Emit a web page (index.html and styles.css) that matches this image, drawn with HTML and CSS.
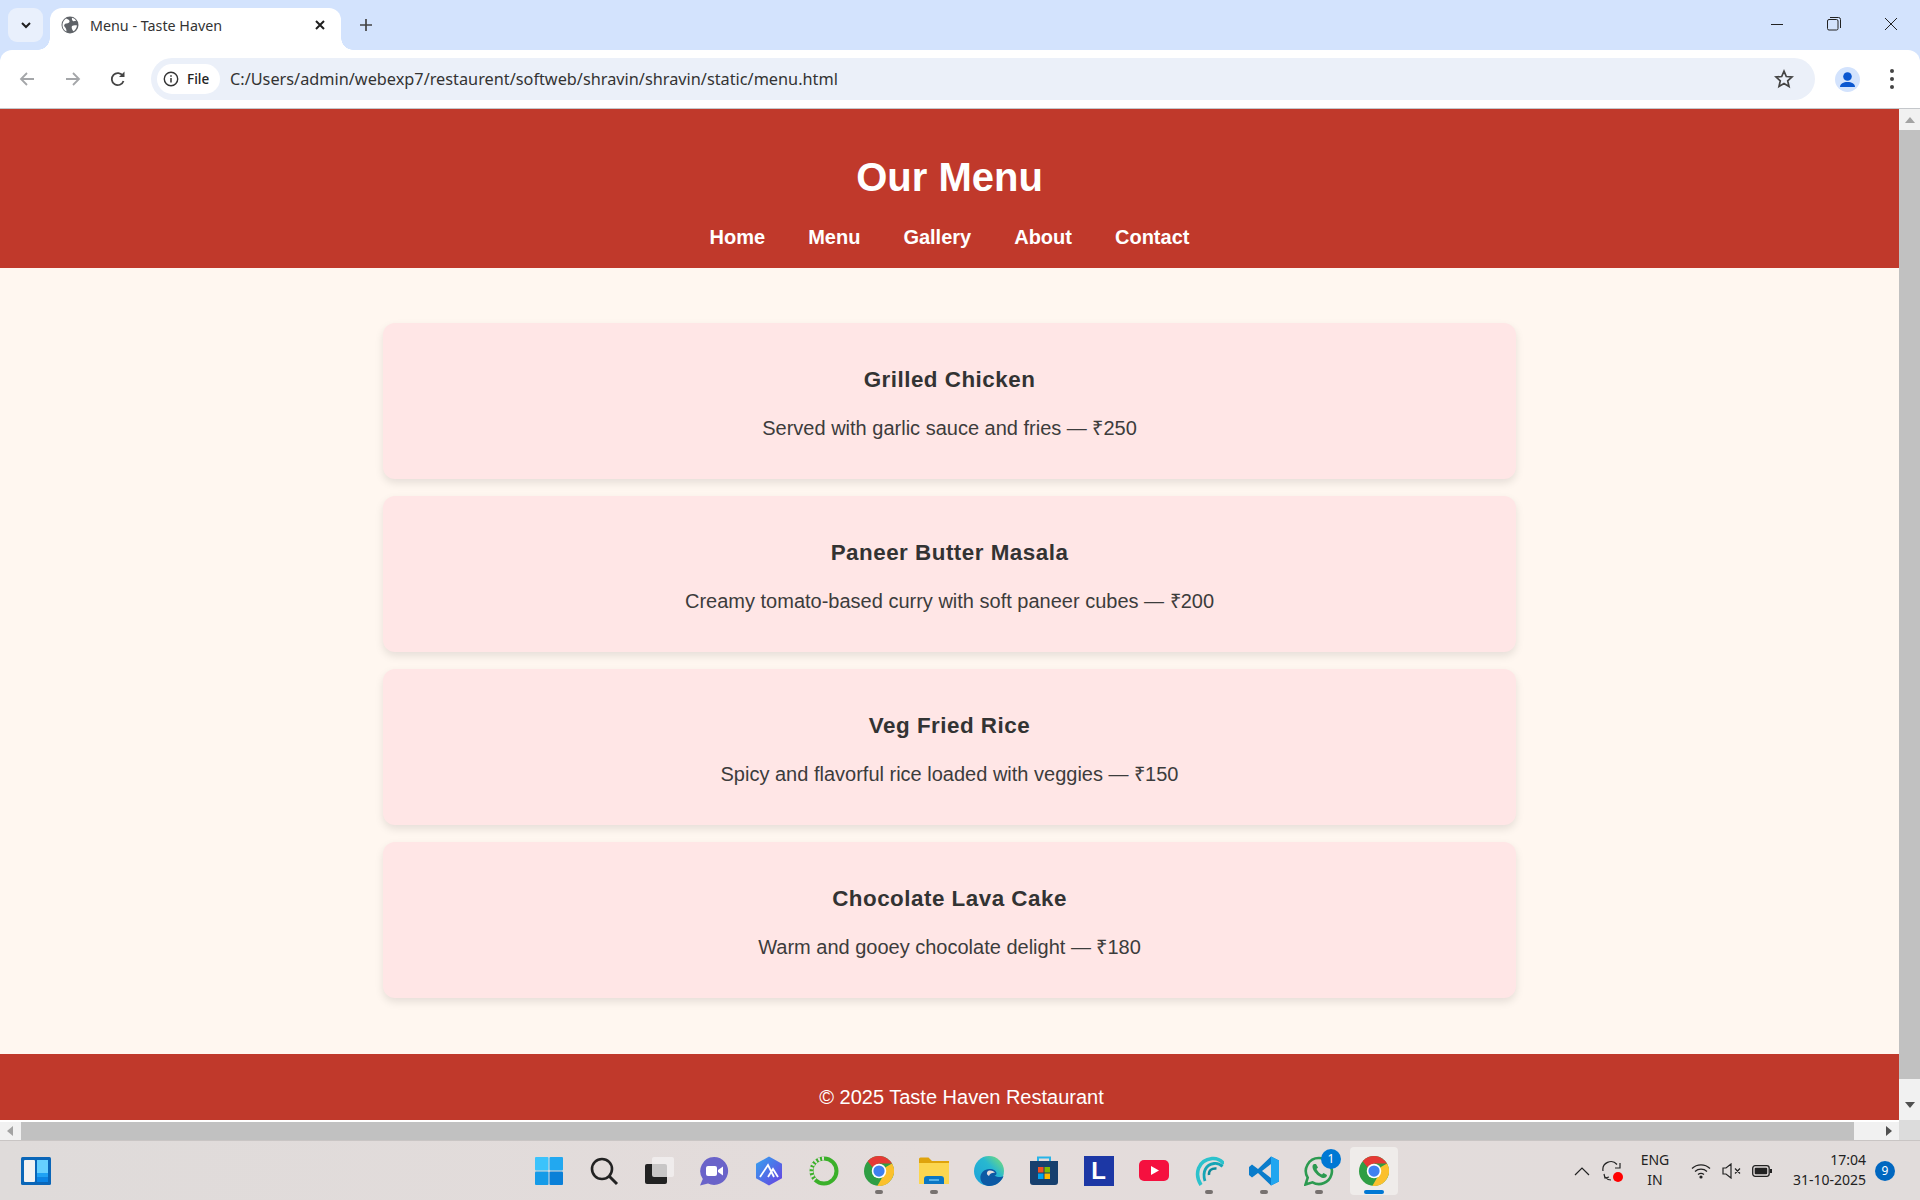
FILE: index.html
```html
<!DOCTYPE html>
<html lang="en">
<head>
<meta charset="utf-8">
<title>Menu - Taste Haven</title>
<link rel="stylesheet" href="styles.css">
</head>
<body>
<svg class="defs" width="0" height="0" aria-hidden="true">
  <symbol id="chrome" viewBox="0 0 24 24">
    <circle cx="12" cy="12" r="12" fill="#2f9e44"/>
    <path d="M22.4 6A12 12 0 0 1 10.6 23.9L15.5 15.5 17.2 9Z" fill="#fbc02d"/>
    <path d="M2.9 4.2A12 12 0 0 1 22.4 6H12L6.8 9Z" fill="#e53935"/>
    <circle cx="12" cy="12" r="5.8" fill="#fff"/>
    <circle cx="12" cy="12" r="4.5" fill="#3f80f0"/>
  </symbol>
</svg>
<div class="tabstrip">
  <div class="tablist-btn"><svg width="14" height="14" viewBox="0 0 14 14"><path d="M3 5l4 4 4-4" fill="none" stroke="#1f1f1f" stroke-width="2"/></svg></div>
  <div class="tab">
    <svg class="favicon" width="18" height="18" viewBox="0 0 18 18"><circle cx="9" cy="9" r="8.5" fill="#5f6368"/><path d="M5 2.500c1.500.5 3 1 3.500 2.500S7 7.500 5.500 7.500 2.500 9 3.500 10.500 5.500 12.500 5.500 15.500C3 14.500 1.500 12 1.500 9 1.500 6.500 3 3.800 5 2.500ZM11 1.800c1.800.5 3.200 1.500 4.200 2.900-1.400 0-2.400.8-3.200.3s-1.400-1.800-1-3.200ZM11 10c1.500-1 3.500-1 5-.5-.3 2.500-1.500 4.500-3.500 5.800-1.200-1.300-2.500-3.800-1.500-5.300Z" fill="#fff"/></svg>
    <span class="tab-title">Menu - Taste Haven</span>
    <svg class="tab-close" width="12" height="12" viewBox="0 0 12 12"><path d="M2 2l8 8M10 2l-8 8" stroke="#1f1f1f" stroke-width="2"/></svg>
  </div>
  <svg class="newtab" width="14" height="14" viewBox="0 0 14 14"><path d="M7 1v12M1 7h12" stroke="#444" stroke-width="1.700"/></svg>
  <div class="winctl">
    <svg width="14" height="14" viewBox="0 0 14 14"><path d="M1 7.500h12" stroke="#222" stroke-width="1"/></svg>
    <svg width="14" height="14" viewBox="0 0 14 14"><rect x=".5" y="2.500" width="10.500" height="10.500" rx="1.500" fill="none" stroke="#222"/><path d="M3 .5h8.500a2 2 0 0 1 2 2V11" fill="none" stroke="#222"/></svg>
    <svg width="14" height="14" viewBox="0 0 14 14"><path d="M1 1l12 12M13 1L1 13" stroke="#222" stroke-width="1"/></svg>
  </div>
</div>
<div class="toolbar">
  <svg class="nav-ico back" width="18" height="18" viewBox="0 0 18 18"><path d="M16 9H3M9 3L3 9l6 6" fill="none" stroke="#a4a6a9" stroke-width="1.800"/></svg>
  <svg class="nav-ico fwd" width="18" height="18" viewBox="0 0 18 18"><path d="M2 9h13M9 3l6 6-6 6" fill="none" stroke="#a4a6a9" stroke-width="1.800"/></svg>
  <svg class="nav-ico reload" width="18" height="18" viewBox="0 0 18 18"><path d="M14.500 11a6 6 0 1 1-.6-5" fill="none" stroke="#444" stroke-width="1.800"/><path d="M15.500 1.500v5.500H10z" fill="#444"/></svg>
  <div class="omnibox">
    <div class="chip">
      <svg width="16" height="16" viewBox="0 0 16 16"><circle cx="8" cy="8" r="6.700" fill="none" stroke="#333" stroke-width="1.400"/><path d="M8 7v4.500M8 4.200v1.500" stroke="#333" stroke-width="1.500"/></svg>
      <span>File</span>
    </div>
    <span class="url">C:/Users/admin/webexp7/restaurent/softweb/shravin/shravin/static/menu.html</span>
    <svg class="star" width="20" height="20" viewBox="0 0 20 20"><path d="M10 2.200l2.300 5.300 5.700.5-4.300 3.800 1.300 5.600-5-3-5 3 1.300-5.600L2 8l5.700-.5z" fill="none" stroke="#444" stroke-width="1.700"/></svg>
  </div>
  <div class="avatar"><svg width="25" height="25" viewBox="0 0 25 25"><circle cx="12.500" cy="12.500" r="12.500" fill="#d3e3fd"/><circle cx="12.500" cy="9.500" r="4.300" fill="#0b57d0"/><path d="M5 20c0-3.500 3.500-5 7.500-5s7.500 1.500 7.500 5z" fill="#0b57d0"/></svg></div>
  <div class="dots"><i></i><i></i><i></i></div>
</div>

<div class="viewport">
  <div class="page">
    <header class="site-header">
      <h1>Our Menu</h1>
      <nav class="site-nav">
        <a>Home</a><a>Menu</a><a>Gallery</a><a>About</a><a>Contact</a>
      </nav>
    </header>
    <main class="menu">
      <section class="card"><h3>Grilled Chicken</h3><p>Served with garlic sauce and fries — ₹250</p></section>
      <section class="card"><h3>Paneer Butter Masala</h3><p>Creamy tomato-based curry with soft paneer cubes — ₹200</p></section>
      <section class="card"><h3>Veg Fried Rice</h3><p>Spicy and flavorful rice loaded with veggies — ₹150</p></section>
      <section class="card"><h3>Chocolate Lava Cake</h3><p>Warm and gooey chocolate delight — ₹180</p></section>
    </main>
    <footer class="site-footer">© 2025 Taste Haven Restaurant</footer>
  </div>
  <div class="vscroll">
    <div class="arrow-up"></div>
    <div class="vthumb"></div>
    <div class="arrow-down"></div>
  </div>
</div>
<div class="hscroll">
  <div class="hbar">
    <div class="arrow-left"></div>
    <div class="hthumb"></div>
    <div class="arrow-right"></div>
  </div>
  <div class="corner"></div>
</div>

<div class="taskbar">
  <svg class="widgets" width="30" height="28" viewBox="0 0 30 28"><rect width="30" height="28" rx="1.500" fill="#0a66b8"/><rect x="3" y="3" width="11" height="22" rx="1" fill="#f2f2f2"/><rect x="16" y="3" width="11" height="13" fill="#66d0ff"/><rect x="16" y="16" width="11" height="4.500" fill="#1fa2f5"/><rect x="16" y="20.500" width="11" height="4.500" fill="#0a84e6"/></svg>
  <div class="apps">
    <div class="app"><svg width="30" height="30" viewBox="0 0 30 30"><rect x="1" y="1" width="13.500" height="13.500" rx="1" fill="#3cc3fb"/><rect x="15.500" y="1" width="13.500" height="13.500" rx="1" fill="#22a8f0"/><rect x="1" y="15.500" width="13.500" height="13.500" rx="1" fill="#159be8"/><rect x="15.500" y="15.500" width="13.500" height="13.500" rx="1" fill="#0a80d8"/></svg></div>
    <div class="app"><svg width="30" height="30" viewBox="0 0 30 30"><circle cx="13" cy="13" r="10" fill="none" stroke="#222" stroke-width="2.600"/><path d="M20 20l8 8" stroke="#222" stroke-width="3"/></svg></div>
    <div class="app"><svg width="30" height="30" viewBox="0 0 30 30"><rect x="1" y="8" width="22" height="20" rx="2" fill="#222"/><rect x="8" y="1" width="22" height="20" rx="2" fill="#f2f0f0" fill-opacity=".8"/></svg></div>
    <div class="app"><svg width="30" height="30" viewBox="0 0 30 30"><path d="M15 1a14 14 0 1 1-6 26.600L1 29.500l2.800-6.500A14 14 0 0 1 15 1Z" fill="#6a63c9"/><rect x="7" y="10" width="11" height="10" rx="2" fill="#fff"/><path d="M19 14l5-3.500v9L19 16z" fill="#fff"/></svg></div>
    <div class="app"><svg width="30" height="30" viewBox="0 0 30 30"><defs><linearGradient id="hexg" x1="0" y1="0" x2="1" y2="1"><stop offset="0" stop-color="#33a4f0"/><stop offset="1" stop-color="#6a3fe0"/></linearGradient></defs><path d="M15 .5l13 7.200v14.600L15 29.500 2 22.300V7.700z" fill="url(#hexg)"/><path d="M6 21l8-12 6 12M14 21l5-8 5 8" fill="none" stroke="#fff" stroke-width="1.800"/></svg></div>
    <div class="app"><svg width="30" height="30" viewBox="0 0 30 30"><circle cx="15" cy="15" r="12.500" fill="none" stroke="#3bb02a" stroke-width="4"/><path d="M15 2.500A12.500 12.500 0 0 0 6 24" fill="none" stroke="#e3dcdc" stroke-width="4" stroke-dasharray="2 2"/></svg></div>
    <div class="app has-dot"><svg width="30" height="30"><use href="#chrome"/></svg></div>
    <div class="app has-dot"><svg width="30" height="30" viewBox="0 0 30 30"><path d="M0 3a1.500 1.500 0 0 1 1.500-1.500h8L13 5h17v4H0z" fill="#dfa30c"/><path d="M0 7h30v21H0z" fill="#fcd64f"/><path d="M5 23a3 3 0 0 1 3-3h14a3 3 0 0 1 3 3v5H5z" fill="#0a76c4"/><path d="M10 24h10" stroke="#6cc4f5" stroke-width="1.500"/></svg></div>
    <div class="app"><svg width="30" height="30" viewBox="0 0 30 30"><defs><linearGradient id="edgeg" x1="0" y1="1" x2="1" y2="0"><stop offset="0" stop-color="#1aa0dc"/><stop offset=".6" stop-color="#28b8d0"/><stop offset="1" stop-color="#84e46a"/></linearGradient></defs><circle cx="15" cy="15" r="15" fill="url(#edgeg)"/><path d="M29.500 20c-2 6-8 10-14 10-4 0-8-2-9-7-1-6 4-10 9-10 4 0 7 2 7 4.500 0 1-1 2-2 2 3 2 7 2 9 .5z" fill="#0c59a4"/><path d="M15 20c-2-1-3-3-1-5 3-1 6 0 7 2-2-.5-5 0-6 3z" fill="#e3dcdc"/></svg></div>
    <div class="app"><svg width="30" height="30" viewBox="0 0 30 30"><path d="M9 5V1.500h12V5" fill="none" stroke="#28b4e8" stroke-width="2"/><path d="M1 5h28v21a3 3 0 0 1-3 3H4a3 3 0 0 1-3-3z" fill="#17406e"/><rect x="9" y="11" width="5.500" height="5.500" fill="#f25022"/><rect x="15.500" y="11" width="5.500" height="5.500" fill="#7fba00"/><rect x="9" y="17.500" width="5.500" height="5.500" fill="#00a4ef"/><rect x="15.500" y="17.500" width="5.500" height="5.500" fill="#ffb900"/></svg></div>
    <div class="app"><div class="logo-l">L</div></div>
    <div class="app"><svg width="30" height="30" viewBox="0 0 30 30"><rect y="4" width="30" height="21" rx="5" fill="#f5103f"/><path d="M12 10l8 4.500-8 4.500z" fill="#fff"/></svg></div>
    <div class="app has-dot"><svg width="30" height="30" viewBox="0 0 30 30"><path d="M7 29C0 18 4 4 18 2.500c5-.5 9 1.500 12 5.500" fill="none" stroke="#2cc2cc" stroke-width="3.500"/><path d="M11 25C8 16 12 8.500 20 7.500c3.500-.5 6 .5 8.500 3" fill="none" stroke="#16a5b5" stroke-width="2.800"/><path d="M15 19c-.5-4.500 2.500-7 7.500-6.500" fill="none" stroke="#0d8a9a" stroke-width="2.500"/></svg></div>
    <div class="app has-dot"><svg width="30" height="30" viewBox="0 0 30 30"><path d="M22 .5l8 4v21l-8 4-13-12.500L3 21.500 0 19v-8l3-2.500L9 13z" fill="#0a7ccb"/><path d="M22 .5l8 4v21l-8 4z" fill="#21a6f0"/><path d="M22 8l-9 7 9 7z" fill="#e3dcdc"/></svg></div>
    <div class="app has-dot"><svg width="30" height="30" viewBox="0 0 30 30"><path d="M15 2a13 13 0 1 1-6.500 24.300L1.500 28.500l2.200-6.800A13 13 0 0 1 15 2Z" fill="none" stroke="#2c9a50" stroke-width="2.600"/><path d="M10 8c-2 1-2 4 0 7s6 6.500 9 7c2 .3 4-1 4-3l-3.500-2-1.500 1.500c-2-.5-4.500-3-5.500-5.500L14 11.500 12 8z" fill="#2c9a50"/></svg><span class="notif">1</span></div>
    <div class="app active"><svg width="30" height="30"><use href="#chrome"/></svg></div>
  </div>
  <div class="tray">
    <svg class="tray-chev" width="16" height="10" viewBox="0 0 16 10"><path d="M1 9l7-7 7 7" fill="none" stroke="#222" stroke-width="1.200"/></svg>
    <div class="tray-sync"><svg width="20" height="22" viewBox="0 0 20 22"><path d="M1 11A8 8 0 0 1 15 4.500M18 3v5h-5M3 17a8 8 0 0 0 6 3M2 14l1 4 4-1" fill="none" stroke="#222" stroke-width="1.200"/></svg><i class="rec"></i></div>
    <div class="tray-lang"><span>ENG</span><span>IN</span></div>
    <svg class="tray-wifi" width="20" height="16" viewBox="0 0 20 16"><path d="M1 5.500a13 13 0 0 1 18 0M4 8.500a9 9 0 0 1 12 0M7 11.500a5 5 0 0 1 6 0" fill="none" stroke="#222" stroke-width="1.300"/><circle cx="10" cy="14" r="1.600" fill="#222"/></svg>
    <svg class="tray-vol" width="20" height="16" viewBox="0 0 20 16"><path d="M1 5h3l5-4v14l-5-4H1zM13 5.500l5 5M18 5.500l-5 5" fill="none" stroke="#222" stroke-width="1.200"/></svg>
    <svg class="tray-batt" width="20" height="14" viewBox="0 0 20 14"><rect x=".7" y="1.700" width="16.500" height="10.600" rx="2.500" fill="none" stroke="#222" stroke-width="1.300"/><rect x="2.700" y="3.700" width="12.500" height="6.600" rx="1" fill="#222"/><rect x="18" y="5" width="2" height="4" fill="#222"/></svg>
    <div class="tray-clock"><span>17:04</span><span>31-10-2025</span></div>
    <span class="tray-badge">9</span>
  </div>
</div>
</body>
</html>
```

FILE: styles.css
```css
* { box-sizing: border-box; }
html, body { margin: 0; padding: 0; }
body {
  width: 1920px;
  height: 1200px;
  overflow: hidden;
  display: flex;
  flex-direction: column;
  font-family: "Liberation Sans", Arial, sans-serif;
  background: #d3e3fd;
}
.defs { position: absolute; }

/* browser frame */
.tabstrip {
  height: 50px;
  flex: none;
  background: #d3e3fd;
  display: flex;
  align-items: flex-end;
  padding-left: 8px;
  font-family: "Noto Sans", sans-serif;
}
.tablist-btn {
  width: 35px;
  height: 34px;
  margin-bottom: 8px;
  border-radius: 9px;
  background: #e9f0fc;
  display: flex;
  align-items: center;
  justify-content: center;
}
.tab {
  position: relative;
  width: 291px;
  height: 42px;
  margin-left: 7px;
  background: #fff;
  border-radius: 12px 12px 0 0;
  display: flex;
  align-items: center;
  padding: 0 15px 8px 11px;
}
.tab::before, .tab::after {
  content: "";
  position: absolute;
  bottom: 0;
  width: 12px;
  height: 12px;
}
.tab::before { left: -12px; background: radial-gradient(circle at 0 0, transparent 11.5px, #fff 12px); }
.tab::after { right: -12px; background: radial-gradient(circle at 100% 0, transparent 11.5px, #fff 12px); }
.tab-title { margin-left: 11px; font-size: 14.300px; color: #333; flex: 1; }
.favicon, .tab-close { flex: none; }
.newtab { margin: 0 0 18px 18px; }
.winctl {
  margin-left: auto;
  margin-right: 22px;
  width: 128px;
  height: 50px;
  padding-bottom: 2px;
  display: flex;
  align-items: center;
  justify-content: space-between;
}
.toolbar {
  height: 59px;
  flex: none;
  background: #fff;
  border-radius: 12px 12px 0 0;
  border-bottom: 1px solid #c4c7cb;
  display: flex;
  align-items: center;
  padding-left: 18px;
}
.nav-ico { flex: none; }
.fwd { margin-left: 28px; }
.reload { margin-left: 27px; }
.omnibox {
  margin-left: 24px;
  width: 1664px;
  height: 42px;
  border-radius: 21px;
  background: #ebf0f9;
  display: flex;
  align-items: center;
  padding: 0 21px 0 6px;
  flex: none;
}
.chip {
  width: 63px;
  height: 30px;
  border-radius: 15px;
  background: #fff;
  display: flex;
  align-items: center;
  gap: 8px;
  padding-left: 6px;
  font: 500 13.500px "Noto Sans", sans-serif;
  color: #222;
}
.url {
  margin-left: 10px;
  flex: 1;
  font: 16.300px "Noto Sans", sans-serif;
  color: #333;
}
.star { flex: none; }
.avatar { margin-left: 20px; width: 25px; height: 25px; flex: none; }
.dots { margin-left: 30px; display: flex; flex-direction: column; gap: 4px; }
.dots i { width: 4px; height: 4px; border-radius: 50%; background: #444; }

/* page */
.viewport { height: 1011px; flex: none; display: flex; }
.page { flex: 1; min-width: 0; overflow: hidden; background: #fff7f0; }
.site-header {
  height: 159px;
  background: #c0392b;
  color: #fff;
  text-align: center;
  padding-top: 45px;
}
.site-header h1 { margin: 0 0 26px; font-size: 40px; line-height: 46px; font-weight: 700; }
.site-nav { display: flex; justify-content: center; gap: 43px; }
.site-nav a { font-size: 20px; line-height: 23px; font-weight: 700; color: #fff; }
.menu {
  padding: 55px 0 56px;
  display: flex;
  flex-direction: column;
  align-items: center;
  gap: 17px;
}
.card {
  width: 1133px;
  height: 156px;
  background: #ffe6e6;
  border-radius: 12px;
  box-shadow: 0 4px 8px rgba(0, 0, 0, .1);
  text-align: center;
  padding-top: 44px;
  color: #333;
}
.card h3 { margin: 0 0 24px; font-size: 22.400px; line-height: 26px; font-weight: 700; letter-spacing: .5px; }
.card p { margin: 0; font-size: 20px; line-height: 23px; color: #3c3c3c; }
.site-footer {
  height: 66px;
  background: #c0392b;
  color: #fff;
  text-align: center;
  font-size: 20px;
  line-height: 23px;
  padding: 32px 0 0 24px;
}

/* scrollbars */
.vscroll {
  width: 21px;
  flex: none;
  background: #f1f1f1;
  display: flex;
  flex-direction: column;
  align-items: center;
  padding-top: 8px;
}
.vthumb { width: 100%; height: 949px; margin-top: 7px; background: #c1c1c1; }
.arrow-up { width: 0; height: 0; border: 5px solid transparent; border-top: 0; border-bottom: 6px solid #a3a3a3; }
.arrow-down { width: 0; height: 0; margin-top: 23px; border: 5px solid transparent; border-bottom: 0; border-top: 6px solid #505050; }
.hscroll { height: 20px; flex: none; display: flex; }
.hbar {
  flex: 1;
  background: #f1f1f1;
  display: flex;
  align-items: center;
  padding: 0 7px;
  border-top: 2px solid #fff;
}
.hthumb { width: 1833px; height: 18px; margin: 0 auto 0 8px; background: #c1c1c1; }
.arrow-left { width: 0; height: 0; border: 5px solid transparent; border-left: 0; border-right: 6px solid #a3a3a3; }
.arrow-right { width: 0; height: 0; border: 5px solid transparent; border-right: 0; border-left: 6px solid #505050; }
.corner { width: 21px; background: #dcdcdc; }

/* taskbar */
.taskbar {
  height: 60px;
  flex: none;
  background: linear-gradient(90deg, #dfdbda, #e4dcdb 50%, #e1dcdb);
  border-top: 1px solid #c9c5c4;
  display: flex;
  align-items: center;
  padding-left: 21px;
  font-family: "Noto Sans", sans-serif;
  color: #222;
}
.widgets { flex: none; }
.apps { display: flex; margin-left: 470px; }
.app {
  position: relative;
  width: 55px;
  height: 48px;
  display: flex;
  align-items: center;
  justify-content: center;
}
.has-dot::after, .active::after {
  content: "";
  position: absolute;
  left: 50%;
  bottom: 1px;
  width: 8px;
  height: 4px;
  margin-left: -4px;
  border-radius: 2px;
  background: #77716f;
}
.active { width: 48px; margin-left: 4px; background: #efecea; border-radius: 4px; }
.active::after { width: 20px; margin-left: -10px; background: #0078d4; bottom: 1px; }
.logo-l {
  width: 30px;
  height: 30px;
  background: #1c37a5;
  color: #fff;
  font: 700 24px/30px "Liberation Sans", sans-serif;
  text-align: center;
}
.notif {
  position: absolute;
  top: 2px;
  left: 30px;
  width: 20px;
  height: 20px;
  border-radius: 50%;
  background: #0078d4;
  color: #fff;
  font-size: 12px;
  line-height: 20px;
  text-align: center;
}
.tray { margin-left: auto; display: flex; align-items: center; height: 100%; font-size: 14px; }
.tray-chev { flex: none; }
.tray-sync { position: relative; margin-left: 12px; width: 20px; height: 22px; }
.rec { position: absolute; right: -1px; bottom: 0; width: 10px; height: 10px; border-radius: 50%; background: #f00; }
.tray-lang { margin: 0 0 2px 9px; width: 48px; display: flex; flex-direction: column; align-items: center; line-height: 20px; }
.tray-wifi { margin-left: 12px; flex: none; }
.tray-vol { margin-left: 11px; flex: none; }
.tray-batt { margin-left: 10px; flex: none; }
.tray-clock { margin: 0 0 2px 14px; width: 80px; display: flex; flex-direction: column; align-items: flex-end; line-height: 20px; }
.tray-badge {
  margin: 0 25px 0 9px;
  width: 20px;
  height: 20px;
  border-radius: 50%;
  background: #0067c0;
  color: #fff;
  font-size: 12px;
  line-height: 20px;
  text-align: center;
}
```
